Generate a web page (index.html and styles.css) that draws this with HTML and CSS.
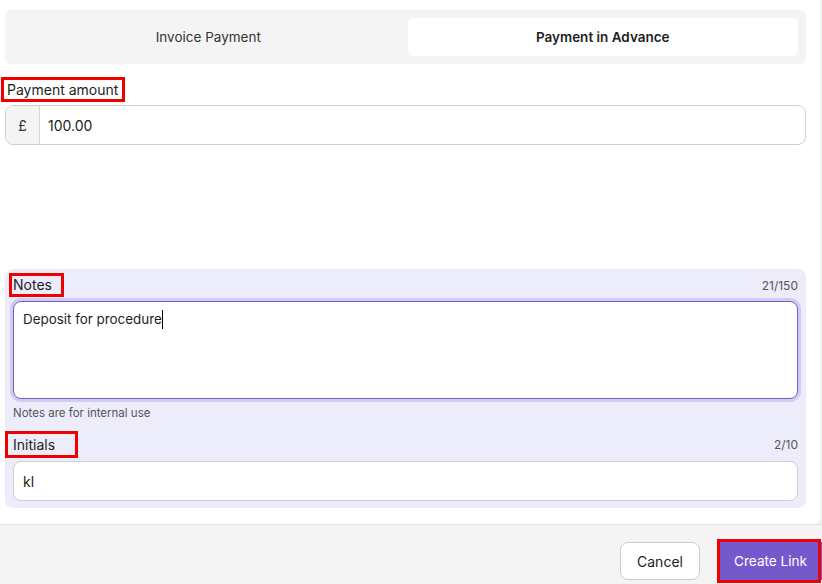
FILE: index.html
```html
<!DOCTYPE html>
<html lang="en">
<head>
<meta charset="utf-8">
<title>Payment link</title>
<link rel="stylesheet" href="styles.css">
</head>
<body>
<div class="card">
  <div class="tabs">
    <div class="tab">Invoice Payment</div>
    <div class="tab tab-active">Payment in Advance</div>
  </div>

  <div class="field-label hl hl-amount">Payment amount</div>
  <div class="amount-input">
    <div class="prefix">£</div>
    <div class="amount-value">100.00</div>
  </div>

  <div class="panel">
    <div class="panel-head">
      <div class="field-label hl hl-notes">Notes</div>
      <div class="counter">21/150</div>
    </div>
    <div class="textarea"><span class="typed">Deposit for procedure</span><span class="caret"></span></div>
    <div class="helper">Notes are for internal use</div>

    <div class="panel-head panel-head-second">
      <div class="field-label hl hl-initials">Initials</div>
      <div class="counter">2/10</div>
    </div>
    <div class="text-input">kl</div>
  </div>
</div>

<div class="footer">
  <button class="btn btn-cancel">Cancel</button>
  <button class="btn btn-primary">Create Link</button>
</div>
</body>
</html>
```

FILE: styles.css
```css
* { box-sizing: border-box; }

html, body {
  margin: 0;
  padding: 0;
}

body {
  width: 822px;
  height: 584px;
  overflow: hidden;
  background: #f4f4f4;
  font-family: "Inter", "Open Sans", sans-serif;
  color: #222;
}

.card {
  width: 820px;
  background: #fff;
  padding: 10px 14px 16px 5px;
  border-bottom-right-radius: 8px;
}

.tabs {
  display: flex;
  gap: 4px;
  height: 54px;
  padding: 8px;
  background: #f4f4f4;
  border-radius: 6px;
}

.tab {
  flex: 1;
  display: flex;
  align-items: center;
  justify-content: center;
  font-size: 13.5px;
  color: #333;
  border-radius: 5px;
}

.tab-active {
  background: #fff;
  font-weight: 600;
  color: #1e1e1e;
}

.field-label {
  display: inline-block;
  font-size: 14px;
  line-height: 19px;
  color: #1e1e1e;
}

.hl {
  outline: 3px solid #f00000;
}

.hl-amount {
  margin-top: 16px;
  margin-left: -1px;
  padding: 0 4px 0 3px;
}

.amount-input {
  display: flex;
  height: 40px;
  margin-top: 6px;
  border: 1px solid #cfcfcf;
  border-radius: 8px;
  overflow: hidden;
}

.prefix {
  width: 34px;
  display: flex;
  align-items: center;
  justify-content: center;
  background: #f4f4f4;
  border-right: 1px solid #d6d6d6;
  font-size: 14px;
  color: #333;
}

.amount-value {
  display: flex;
  align-items: center;
  padding-left: 8px;
  font-size: 14px;
  color: #222;
}

.panel {
  margin-top: 124px;
  width: 801px;
  background: #edecfb;
  border-radius: 8px;
  padding: 6px 8px 7px 8px;
}

.panel-head {
  display: flex;
  justify-content: space-between;
  align-items: center;
  height: 20px;
  margin-bottom: 6px;
}

.panel-head-second {
  height: 22px;
  margin-top: 13px;
}

.hl-notes {
  margin-left: -1px;
  padding: 0 9px 0 1px;
  line-height: 18px;
}

.hl-initials {
  margin-left: -5px;
  padding: 0 20px 0 5px;
  line-height: 21px;
}

.counter {
  font-size: 12px;
  color: #555;
}

.textarea {
  height: 98px;
  background: #fff;
  border: 1px solid #6e5fd2;
  border-radius: 8px;
  box-shadow: 0 0 0 3px #d2ccf2;
  padding: 7px 9px;
  font-size: 13.4px;
  line-height: 20px;
  color: #1e1e1e;
  display: flex;
  align-items: flex-start;
}

.caret {
  display: inline-block;
  width: 1px;
  height: 19px;
  margin-top: 1px;
  background: #000;
}

.helper {
  margin-top: 7px;
  font-size: 11.5px;
  line-height: 14px;
  color: #555;
}

.text-input {
  height: 40px;
  background: #fff;
  border: 1px solid #cfcfcf;
  border-radius: 8px;
  display: flex;
  align-items: center;
  padding-left: 9px;
  font-size: 14px;
  color: #222;
}

.footer {
  height: 60px;
  border-top: 1px solid #e4e4e4;
  display: flex;
  justify-content: flex-end;
  align-items: flex-start;
  gap: 20px;
  padding-top: 17px;
  margin-right: -5px;
}

.btn {
  font-family: inherit;
  font-size: 14px;
  height: 38px;
  border-radius: 8px;
  cursor: pointer;
}

.btn-cancel {
  width: 80px;
  background: #fff;
  border: 1px solid #cccccc;
  color: #222;
}

.btn-primary {
  position: relative;
  width: 107px;
  border: none;
  border-radius: 0;
  background: #7559cc;
  color: #fff;
  font-size: 13.6px;
  text-align: left;
  padding: 0 0 0 14px;
}

.btn-primary::after {
  content: "";
  position: absolute;
  left: -3px;
  top: -3px;
  right: 6px;
  bottom: -3px;
  border: 3px solid #f00000;
}
```
